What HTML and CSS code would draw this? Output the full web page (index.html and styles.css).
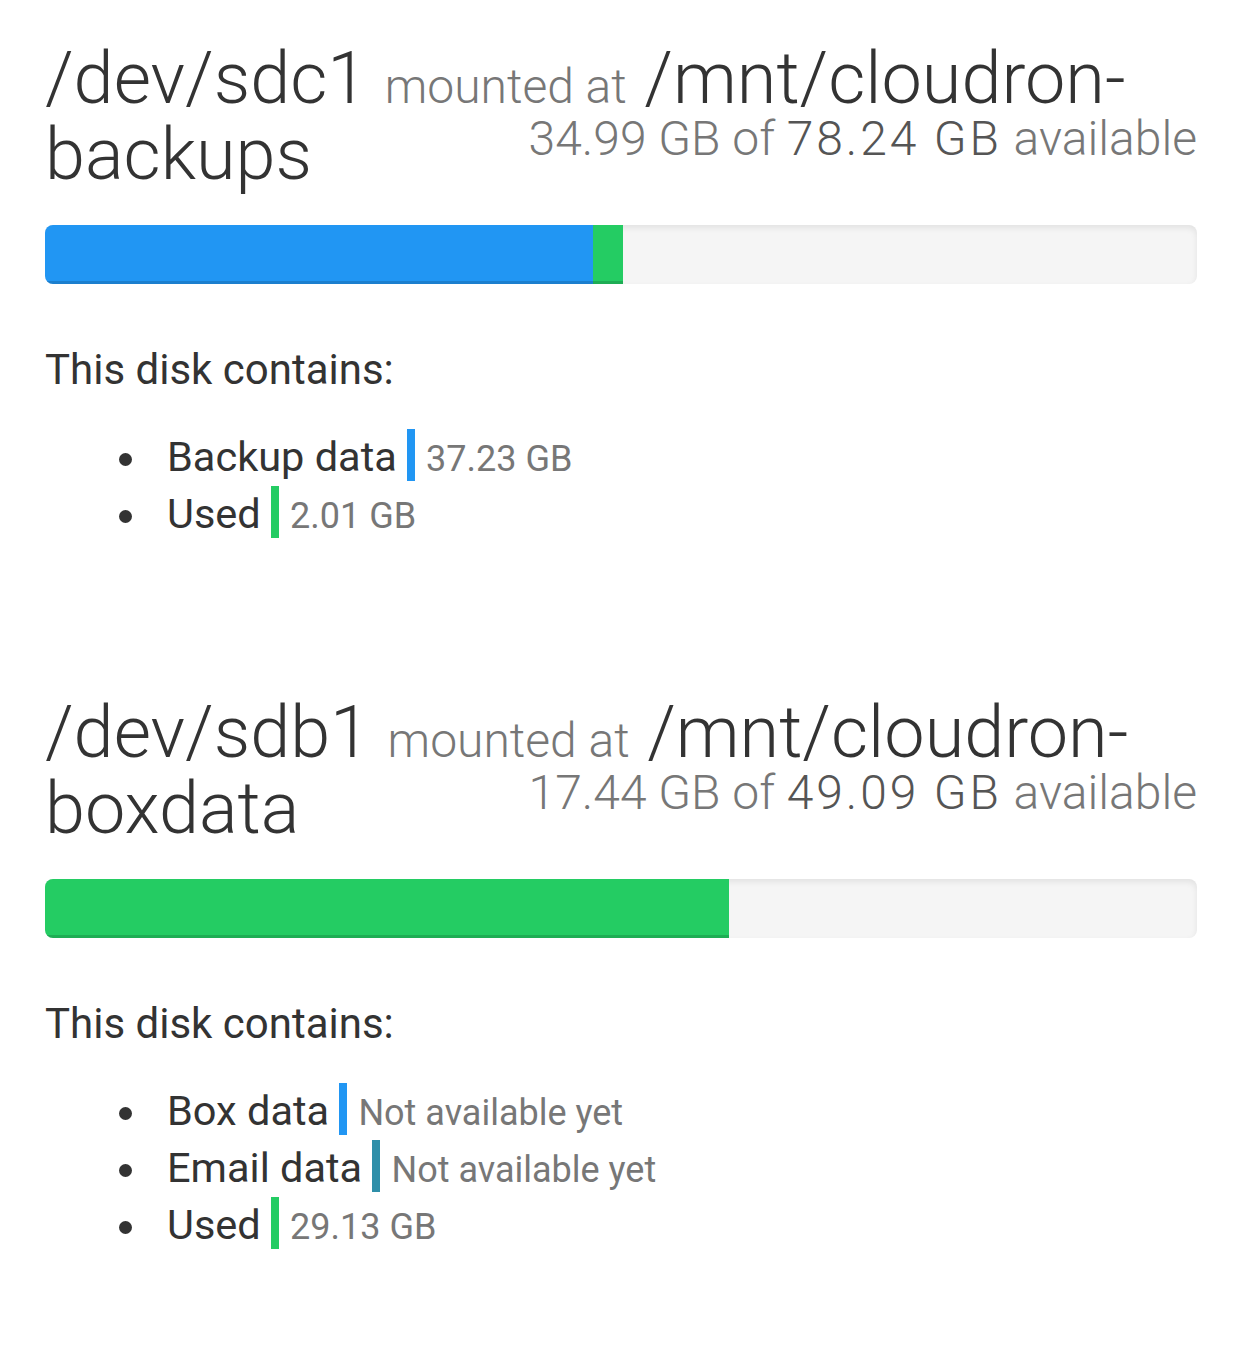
FILE: index.html
```html
<!DOCTYPE html>
<html lang="en">

<head>
    <meta charset="UTF-8" />
    <meta name="viewport" content="width=device-width, initial-scale=1.0" />
    <title>Disk Usage</title>

    <link rel="stylesheet" href="styles.css">
</head>

<body>
    <main class="disks">
        <section class="disk">
            <h1 class="disk-title">
                /dev/sdc1 <small class="disk-mount">mounted at</small> /mnt/cloudron-backups
                <small class="disk-free">34.99 GB of <b>78.24 GB</b> available</small>
            </h1>

            <div class="progress">
                <div class="progress-bar bar-backup" style="width: 47.58%"></div>
                <div class="progress-bar bar-used" style="width: 2.57%"></div>
            </div>

            <p class="disk-label">This disk contains:</p>
            <ul class="disk-list">
                <li>Backup data <span class="swatch swatch-backup"></span><small class="size">37.23 GB</small></li>
                <li>Used <span class="swatch swatch-used"></span><small class="size">2.01 GB</small></li>
            </ul>
        </section>

        <section class="disk">
            <h1 class="disk-title">
                /dev/sdb1 <small class="disk-mount">mounted at</small> /mnt/cloudron-boxdata
                <small class="disk-free">17.44 GB of <b>49.09 GB</b> available</small>
            </h1>

            <div class="progress">
                <div class="progress-bar bar-used" style="width: 59.34%"></div>
            </div>

            <p class="disk-label">This disk contains:</p>
            <ul class="disk-list">
                <li>Box data <span class="swatch swatch-box"></span><small class="size">Not available yet</small></li>
                <li>Email data <span class="swatch swatch-email"></span><small class="size">Not available yet</small></li>
                <li>Used <span class="swatch swatch-used"></span><small class="size">29.13 GB</small></li>
            </ul>
        </section>
    </main>
</body>

</html>
```

FILE: styles.css
```css
body {
    margin: 0;
    background: #fff;
    color: #333;
    font-family: Roboto, "Liberation Sans", sans-serif;
}

.disks {
    padding: 0 45px;
}

.disk {
    padding-top: 41px;
    padding-bottom: 112px;
}

.disk-title {
    margin: 0;
    font-size: 72px;
    font-weight: 300;
    line-height: 76px;
    color: #333;
}

.disk-mount {
    font-size: 48px;
    line-height: 1;
    color: #777;
}

.disk-free {
    float: right;
    margin-top: -2px;
    font-size: 48px;
    line-height: 1;
    color: #777;
}

.disk-free b {
    font-weight: 300;
    letter-spacing: 2.9px;
    color: #555;
}

.progress {
    display: flex;
    height: 59px;
    margin-top: 32px;
    border-radius: 8px;
    overflow: hidden;
    background-color: #f5f5f5;
    box-shadow: inset 0 3px 6px rgba(0, 0, 0, 0.08);
}

.progress-bar {
    height: 100%;
    box-shadow: inset 0 -3px 0 rgba(0, 0, 0, 0.15);
}

.bar-backup {
    background-color: #2196f3;
}

.bar-used {
    background-color: #24cc63;
}

.disk-label {
    margin: 57px 0 0;
    font-size: 42px;
    line-height: 57px;
}

.disk-list {
    margin: 30px 0 0;
    padding-left: 122px;
    list-style: none;
    font-size: 41.5px;
    line-height: 57px;
}

.disk-list li::before {
    content: "";
    display: inline-block;
    width: 13px;
    height: 13px;
    margin-left: -48px;
    margin-right: 35px;
    border-radius: 50%;
    background-color: #333;
    vertical-align: 5px;
}

.swatch {
    display: inline-block;
    width: 8px;
    height: 52px;
    margin-right: 11px;
    vertical-align: -10px;
}

.swatch-backup,
.swatch-box {
    background-color: #2196f3;
}

.swatch-email {
    background-color: #2f8fa9;
}

.swatch-used {
    background-color: #24cc63;
}

.size {
    font-size: 36px;
    line-height: 1;
    color: #777;
}
```
